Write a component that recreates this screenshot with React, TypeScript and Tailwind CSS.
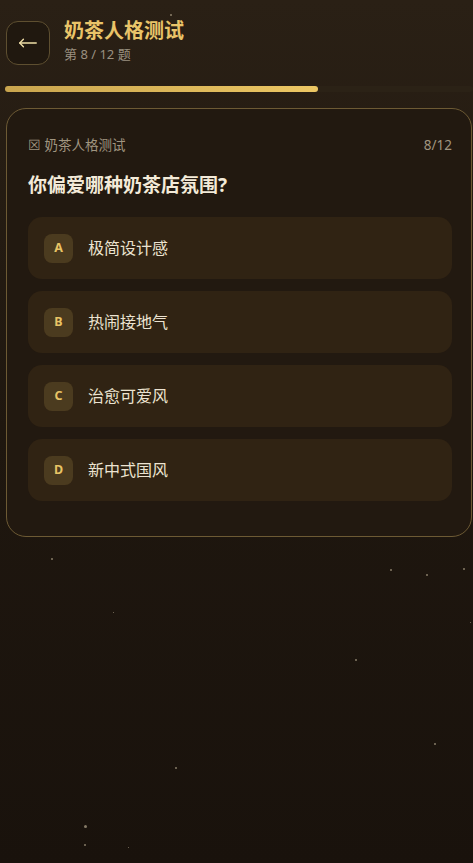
import React from "react";

const stars: [number, number, number][] = [
  [51, 558, 1.5], [113, 612, 1], [390, 569, 1.5], [426, 574, 1.5], [463, 568, 2],
  [470, 622, 1], [355, 659, 2], [434, 743, 1.5], [175, 767, 2], [84, 825, 2.5],
  [84, 844, 1.5], [128, 847, 1], [170, 14, 1.5],
];

const options = [
  { k: "A", t: "极简设计感" },
  { k: "B", t: "热闹接地气" },
  { k: "C", t: "治愈可爱风" },
  { k: "D", t: "新中式国风" },
];

export default function App() {
  return (
    <div
      className="relative w-[473px] h-[863px] overflow-hidden bg-gradient-to-b from-[#2a2015] via-[#1f170f] to-[#19120c]"
      style={{ fontFamily: '"Noto Sans", "Noto Sans CJK SC", sans-serif' }}
    >
      {stars.map(([x, y, s], i) => (
        <div
          key={i}
          className="absolute rounded-full bg-[#cdbfa3] opacity-60"
          style={{ left: x, top: y, width: s, height: s }}
        />
      ))}
      <div className="relative flex flex-col">
        <div className="flex items-center gap-[14px] pl-[6px] pt-[20px]">
          <button className="flex h-[44px] w-[44px] items-center justify-center rounded-[12px] border border-[#5e4f30] bg-[#20180f] text-[#f0dfa8]">
            <svg width="22" height="22" viewBox="0 0 24 24" fill="none" stroke="currentColor" strokeWidth="1.5" strokeLinecap="round" strokeLinejoin="round">
              <path d="M21 12H3" />
              <path d="M7 8l-4 4 4 4" />
            </svg>
          </button>
          <div className="flex flex-col pb-[3px]">
            <div className="text-[20px] font-bold leading-[22px] text-[#e9c469]">奶茶人格测试</div>
            <div className="mt-[3px] text-[13px] leading-[18px] text-[#9a9080]">第 8 / 12 题</div>
          </div>
        </div>
        <div className="ml-[5px] mt-[20px] h-[6px] rounded-full bg-[#2b2216]">
          <div className="h-full w-[313px] rounded-full bg-gradient-to-r from-[#c9a54e] to-[#ecc764]" />
        </div>
        <div className="ml-[6px] mr-[1px] mt-[16px] rounded-[20px] border border-[#6d5a34] bg-[#221910] pl-[21px] pr-[19px] pb-[35px] pt-[27px]">
          <div className="flex items-center justify-between text-[13.5px] leading-[18px] text-[#a09580]">
            <span>☒ 奶茶人格测试</span>
            <span>8/12</span>
          </div>
          <div className="mt-[17px] text-[19px] font-bold leading-[28px] text-[#f3ead8]">你偏爱哪种奶茶店氛围?</div>
          <div className="mt-[18px] flex flex-col gap-[12px]">
            {options.map((o) => (
              <div key={o.k} className="flex h-[62px] items-center gap-[15px] rounded-[14px] bg-[#302313] px-[16px]">
                <div className="flex h-[29px] w-[29px] items-center justify-center rounded-[8px] bg-[#4b3b1f] text-[12.5px] font-bold text-[#e8c465]">
                  {o.k}
                </div>
                <span className="text-[16px] text-[#ece3d1]">{o.t}</span>
              </div>
            ))}
          </div>
        </div>
      </div>
    </div>
  );
}
